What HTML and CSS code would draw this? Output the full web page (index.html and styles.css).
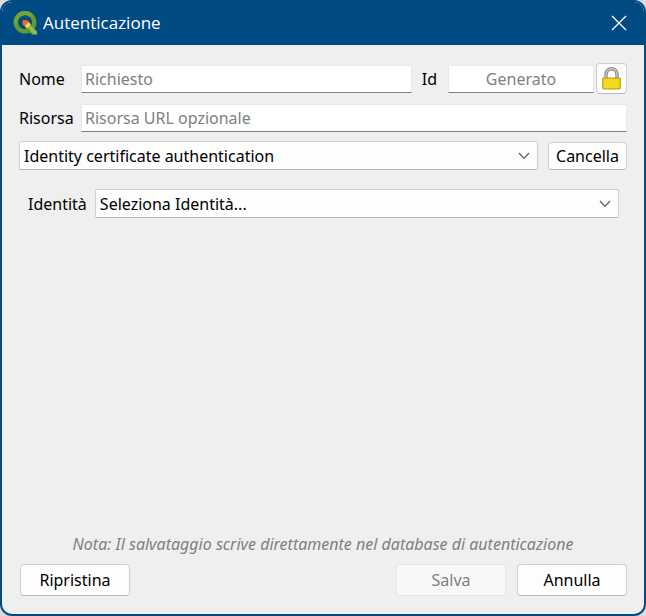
FILE: index.html
```html
<!DOCTYPE html>
<html lang="it">
<head>
<meta charset="utf-8">
<title>Autenticazione</title>
<link rel="stylesheet" href="styles.css">
</head>
<body>
<div class="dialog">
  <header class="titlebar">
    <svg class="logo" viewBox="0 0 24 24" aria-hidden="true">
      <circle cx="12" cy="11.2" r="9.2" fill="none" stroke="#619b31" stroke-width="4.4"/>
      <path d="M3 13A9.2 9.2 0 0 1 18.5 4.7" fill="none" stroke="#76a52f" stroke-width="4"/>
      <path d="M15.5 12.5L24 20.5V23.5H19.5L12.5 16.5Z" fill="#8fbd4e"/>
      <path d="M13.5 15.5L20.5 23.5H18.5L12.5 17.5Z" fill="#589632"/>
      <path d="M9.5 9.2H14.2L17 12L12.5 16L9.5 13.2Z" fill="#ee7422"/>
      <path d="M15.6 11.2L18 13.4L14 17.2L12 15Z" fill="#f3dc4f"/>
    </svg>
    <h1 class="title">Autenticazione</h1>
    <button type="button" class="close" aria-label="Chiudi">
      <svg width="16" height="16" viewBox="0 0 16 16"><path d="M1 1L15 15M15 1L1 15" stroke="#fff" stroke-width="1.3"/></svg>
    </button>
  </header>

  <form class="content">
    <div class="fields">
      <label for="nome">Nome</label>
      <div class="name-row">
        <input type="text" id="nome" class="line name" placeholder="Richiesto">
        <label for="authid">Id</label>
        <input type="text" id="authid" class="line authid" placeholder="Generato">
        <button type="button" class="btn lock" aria-label="Blocca Id">
          <svg width="20" height="24" viewBox="0 0 20 24">
            <path d="M4 12V7.5A5.5 5.8 0 0 1 15 7.5V12" fill="none" stroke="#858585" stroke-width="3.4"/>
            <path d="M4 12V7.5A5.5 5.8 0 0 1 15 7.5V12" fill="none" stroke="#d2d2d2" stroke-width="1.2"/>
            <rect x="0.8" y="11.2" width="17.4" height="10.6" rx="0.8" fill="#f0dc1e" stroke="#c7a20c" stroke-width="1.3"/>
          </svg>
        </button>
      </div>
      <label for="risorsa">Risorsa</label>
      <input type="text" id="risorsa" class="line" placeholder="Risorsa URL opzionale">
    </div>

    <div class="method-row">
      <div class="combo">
        <select aria-label="Metodo di autenticazione">
          <option>Identity certificate authentication</option>
        </select>
        <svg class="arrow" width="12" height="8" viewBox="0 0 12 8"><path d="M1 1L6 6.3L11 1" fill="none" stroke="#5c5c5c" stroke-width="1.2"/></svg>
      </div>
      <button type="button" class="btn clear">Cancella</button>
    </div>

    <div class="identity-row">
      <label for="identita">Identità</label>
      <div class="combo">
        <select id="identita">
          <option>Seleziona Identità...</option>
        </select>
        <svg class="arrow" width="12" height="8" viewBox="0 0 12 8"><path d="M1 1L6 6.3L11 1" fill="none" stroke="#5c5c5c" stroke-width="1.2"/></svg>
      </div>
    </div>

    <p class="note">Nota: Il salvataggio scrive direttamente nel database di autenticazione</p>

    <div class="buttons">
      <button type="reset" class="btn">Ripristina</button>
      <button type="submit" class="btn save" disabled>Salva</button>
      <button type="button" class="btn">Annulla</button>
    </div>
  </form>
</div>
</body>
</html>
```
FILE: styles.css
```css
* {
    box-sizing: border-box;
}
body {
    margin: 0;
    background: #dcdcdc;
    color: #000;
    font: 16px/24px "Noto Sans", Tahoma, sans-serif;
}
input, select, button {
    font: inherit;
    color: inherit;
}
.dialog {
    display: flex;
    flex-direction: column;
    min-height: 100vh;
    border: 2px solid #004b84;
    border-radius: 12px;
    background: #efefef;
    overflow: hidden;
}

/* title bar */
.titlebar {
    display: flex;
    align-items: center;
    height: 43px;
    padding: 0 17px 2px 11px;
    background: #004b84;
    color: #fff;
}
.logo {
    width: 24px;
    height: 24px;
}
.title {
    flex: 1;
    margin: 0 0 0 6px;
    font: 17px/24px "Open Sans", "Segoe UI", sans-serif;
}
.close {
    display: flex;
    padding: 0;
    border: 0;
    background: none;
}

/* form */
.content {
    flex: 1;
    display: flex;
    flex-direction: column;
    padding: 18px 17px;
}
.fields {
    display: grid;
    grid-template-columns: 52px 1fr;
    align-items: center;
    column-gap: 10px;
    row-gap: 10px;
}
.name-row {
    display: flex;
    align-items: center;
}
.line {
    width: 100%;
    min-width: 0;
    height: 28px;
    padding: 0 3px;
    border: 1px solid #e8e8e8;
    border-bottom-color: #808080;
    background: #fff;
}
.line::placeholder {
    color: #808080;
    opacity: 1;
}
.name {
    flex: 1;
    margin-right: 10px;
}
.authid {
    width: 146px;
    margin: 0 2px 0 11px;
    text-align: center;
}
.btn {
    width: 110px;
    height: 32px;
    padding: 0;
    border: 1px solid #d0d0d0;
    border-bottom-color: #b8b8b8;
    border-radius: 4px;
    background: #fdfdfd;
}
.btn:disabled {
    border-color: #e6e6e6;
    background: #f8f8f8;
    color: #808080;
}
.lock {
    display: flex;
    align-items: center;
    justify-content: center;
    width: 31px;
    height: 31px;
}
.combo {
    position: relative;
    flex: 1;
}
.combo select {
    display: block;
    width: 100%;
    height: 29px;
    padding: 0 28px 0 4px;
    appearance: none;
    border: 1px solid #d0d0d0;
    border-bottom-color: #b8b8b8;
    border-radius: 2px;
    background: #fdfdfd;
}
.arrow {
    position: absolute;
    top: 11px;
    right: 8px;
    pointer-events: none;
}
.method-row {
    display: flex;
    align-items: flex-end;
    gap: 10px;
    margin-top: 9px;
}
.clear {
    width: 79px;
    height: 28px;
}
.identity-row {
    display: flex;
    align-items: center;
    gap: 8px;
    margin: 19px 8px 0 9px;
}
.note {
    margin: auto 0 8px;
    color: #808080;
    font-style: italic;
    text-align: center;
}
.buttons {
    display: flex;
    gap: 11px;
    padding-left: 1px;
}
.save {
    margin-left: auto;
}
```
